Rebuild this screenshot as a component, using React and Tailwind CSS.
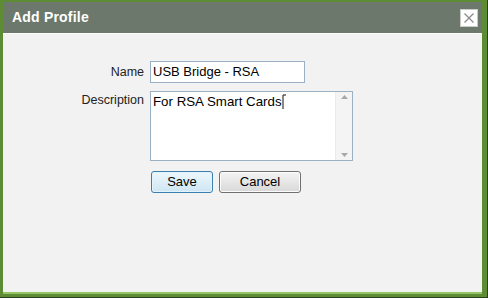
import React from "react";

export default function App() {
  const font = { fontFamily: '"Liberation Sans", Arial, sans-serif' };
  return (
    <div className="w-[488px] h-[298px] bg-[#5e8c35] border-r border-b border-[#2c3f1f] pt-[2px] pl-[3px] pr-[5px] pb-[3px] flex flex-col" style={font}>
      <div className="flex-1 flex flex-col border-b-2 border-[#93c565]">
        <div className="h-[31px] bg-[#6b786b] flex items-center justify-between pl-[9px] pr-[4px]">
          <span className="text-white font-bold text-[14px] tracking-[0.2px]">Add Profile</span>
          <div className="w-[18px] h-[18px] bg-white border border-[#c8cdc8] flex items-center justify-center">
            <svg width="12" height="12" viewBox="0 0 12 12">
              <path d="M1.5 1.5 L10.5 10.5 M10.5 1.5 L1.5 10.5" stroke="#8a8a8a" strokeWidth="1.2" fill="none" />
            </svg>
          </div>
        </div>
        <div className="flex-1 bg-[#f2f2f2] border-t border-[#fbfbfb] pt-[27px]">
          <div className="grid grid-cols-[141px_auto] gap-x-[6px] gap-y-[8px] items-start text-[12.5px] text-[#222]">
            <div className="text-right h-[22px] leading-[22px]">Name</div>
            <div className="w-[155px] h-[22px] bg-white border border-[#9ab0c4] pl-[2px] text-[13px] leading-[20px] text-black">USB Bridge - RSA</div>
            <div className="text-right pt-[1px] leading-[16px]">Description</div>
            <div className="w-[203px] h-[70px] bg-white border border-[#9ab0c4] flex">
              <div className="flex-1 pl-[2px] pt-[2px] text-[13.3px] leading-[16px] text-black flex items-start">
                <span>For RSA Smart Cards</span>
                <svg width="5" height="16" viewBox="0 0 5 16">
                  <path d="M1 1 V15 M1 1 H4" stroke="#111" strokeWidth="1" fill="none" />
                </svg>
              </div>
              <div className="w-[17px] bg-[#f4f4f4] border-l border-[#ebebeb] flex flex-col justify-between items-center py-[3px]">
                <svg width="7" height="4" viewBox="0 0 7 4"><path d="M0 4 L3.5 0 L7 4 Z" fill="#a8a8a8" /></svg>
                <svg width="7" height="4" viewBox="0 0 7 4"><path d="M0 0 L3.5 4 L7 0 Z" fill="#a8a8a8" /></svg>
              </div>
            </div>
            <div />
            <div className="flex gap-[6px] pt-[2px] pl-[1px]">
              <button className="w-[62px] h-[22px] rounded-[3px] border border-[#3c7fb1] bg-gradient-to-b from-[#eef7fc] to-[#cde6f3] shadow-[inset_0_0_0_1px_#e4f3fb] text-[13px] text-black leading-[20px]">Save</button>
              <button className="w-[82px] h-[22px] rounded-[3px] border border-[#707070] bg-gradient-to-b from-[#f4f4f4] to-[#d8d8d8] shadow-[inset_0_0_0_1px_#fcfcfc] text-[13px] text-black leading-[20px]">Cancel</button>
            </div>
          </div>
        </div>
      </div>
    </div>
  );
}
